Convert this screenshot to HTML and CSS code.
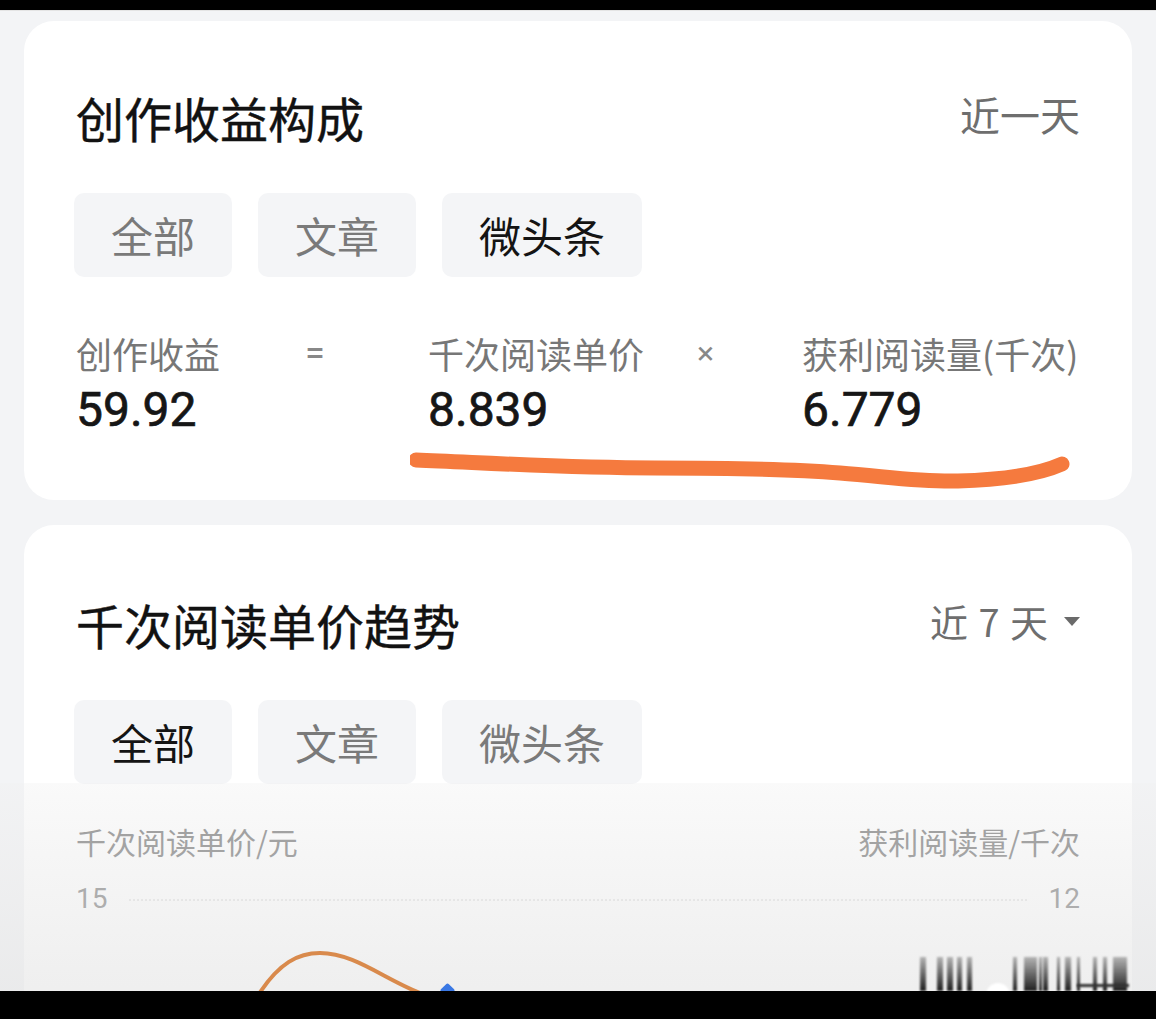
FILE: index.html
```html
<!DOCTYPE html>
<html lang="zh-CN">
<head>
<meta charset="utf-8">
<title>创作收益构成</title>
<link rel="stylesheet" href="styles.css">
</head>
<body>
<div class="screen">
  <div class="edge edge-top"></div>
  <div class="viewport">
    <section class="card card-income">
      <header class="card-head">
        <h2 class="card-title">创作收益构成</h2>
        <span class="range">近一天</span>
      </header>
      <div class="tabs">
        <span class="tab">全部</span>
        <span class="tab">文章</span>
        <span class="tab tab-on">微头条</span>
      </div>
      <div class="formula">
        <span class="f-label">创作收益</span>
        <span class="f-op">=</span>
        <span class="f-label">千次阅读单价</span>
        <span class="f-op f-times">×</span>
        <span class="f-label">获利阅读量(千次)</span>
        <span class="f-value">59.92</span>
        <span></span>
        <span class="f-value">8.839</span>
        <span></span>
        <span class="f-value">6.779</span>
      </div>
      <svg class="scribble" viewBox="0 0 700 50" width="700" height="50" aria-hidden="true">
        <path d="M6 14 C 80 17, 160 22, 245 22 S 380 23, 430 27 S 510 36, 548 35 S 625 30, 652 18" fill="none" stroke="#f57a3e" stroke-width="15" stroke-linecap="round" stroke-linejoin="round"/>
      </svg>
    </section>

    <section class="card card-trend">
      <header class="card-head">
        <h2 class="card-title">千次阅读单价趋势</h2>
        <span class="range range-pick">近 7 天<i class="caret"></i></span>
      </header>
      <div class="tabs">
        <span class="tab tab-on">全部</span>
        <span class="tab">文章</span>
        <span class="tab">微头条</span>
      </div>
      <div class="axis-titles">
        <span>千次阅读单价/元</span>
        <span>获利阅读量/千次</span>
      </div>
      <div class="axis-row">
        <span class="tick">15</span>
        <span class="gridline"></span>
        <span class="tick">12</span>
      </div>
      <svg class="chart" viewBox="0 0 1108 80" width="1108" height="80" aria-hidden="true">
        <path d="M233 80 C 255 45, 275 36, 296 36 C 330 36, 360 62, 396 76" fill="none" stroke="#d98a4c" stroke-width="4" stroke-linecap="round"/>
        <rect x="418" y="68" width="11" height="11" rx="2" fill="#3a78e4" transform="rotate(45 423.5 73.5)"/>
      </svg>
    </section>

    <div class="fade"></div>
    <div class="watermark">
      <i style="left:0;width:6px"></i>
      <i style="left:17px;width:6px"></i>
      <i style="left:27px;width:6px"></i>
      <i style="left:37px;width:5px"></i>
      <i style="left:47px;width:5px"></i>
      <i style="left:93px;width:4px"></i>
      <i style="left:104px;width:13px"></i>
      <i style="left:119px;width:3px"></i>
      <i style="left:123px;width:5px"></i>
      <i style="left:137px;width:3px"></i>
      <i style="left:145px;width:6px"></i>
      <i style="left:157px;width:3px"></i>
      <i style="left:173px;width:4px"></i>
      <i style="left:183px;width:4px"></i>
      <i style="left:193px;width:14px"></i>
      <b class="wm-dot"></b>
      <b class="wm-line"></b>
    </div>
  </div>
  <div class="edge edge-bottom"></div>
</div>
</body>
</html>
```

FILE: styles.css
```css
* { box-sizing: border-box; }

html, body {
  margin: 0;
  padding: 0;
  background: #000;
}

body {
  font-family: "Noto Sans CJK SC", "Noto Sans", sans-serif;
  color: #151515;
}

.screen {
  width: 1156px;
  height: 1019px;
  display: flex;
  flex-direction: column;
  overflow: hidden;
}

.edge { background: #000; flex: none; }
.edge-top { height: 10px; }
.edge-bottom { height: 28px; }

.viewport {
  flex: 1;
  position: relative;
  overflow: hidden;
  background: #f3f4f6;
  padding: 10px 24px 0;
  border-top: 1px solid #e4e4e4;
}

.card {
  background: #fff;
  border-radius: 30px;
  position: relative;
}

.card-income {
  padding: 67px 52px 62px;
}

.card-trend {
  margin-top: 25px;
  padding: 70px 52px 0;
  height: 600px;
}

.card-head {
  display: flex;
  justify-content: space-between;
  align-items: center;
  height: 58px;
}

.card-title {
  margin: 0;
  font-size: 48px;
  line-height: 58px;
  font-weight: 400;
  -webkit-text-stroke: 0.4px #121212;
  color: #121212;
  letter-spacing: 0;
}

.range {
  font-size: 40px;
  line-height: 50px;
  color: #6e6e6e;
  margin-top: -6px;
}

.range-pick {
  font-size: 38px;
  display: flex;
  align-items: center;
  word-spacing: 2px;
}

.caret {
  display: inline-block;
  width: 0;
  height: 0;
  margin-left: 16px;
  border-left: 8px solid transparent;
  border-right: 8px solid transparent;
  border-top: 9px solid #6a6a6a;
}

.tabs {
  display: flex;
  gap: 26px;
  margin-top: 47px;
  margin-left: -2px;
}

.tab {
  height: 84px;
  padding: 0 37px;
  border-radius: 10px;
  background: #f4f5f7;
  color: #7a7a7a;
  font-size: 42px;
  line-height: 84px;
}

.tab-on { color: #141414; }

.formula {
  display: grid;
  grid-template-columns: 229px 123px 269px 105px 1fr;
  grid-template-rows: 44px 56px;
  row-gap: 7px;
  margin-top: 54px;
}

.f-label {
  font-size: 36px;
  line-height: 44px;
  color: #777;
  white-space: nowrap;
}

.f-op {
  font-family: "Roboto", "Liberation Sans", sans-serif;
  font-size: 36px;
  line-height: 44px;
  color: #888;
}

.f-times { font-size: 32px; }

.f-value {
  font-family: "Roboto", "Noto Sans", sans-serif;
  font-weight: 400;
  -webkit-text-stroke: 0.7px #161616;
  font-size: 48px;
  line-height: 56px;
  color: #161616;
}

.scribble {
  position: absolute;
  left: 386px;
  top: 425px;
}

.axis-titles {
  display: flex;
  justify-content: space-between;
  margin-top: 37px;
  font-size: 30px;
  line-height: 40px;
  color: #6e6e6e;
}

.axis-row {
  display: flex;
  align-items: center;
  gap: 22px;
  margin-top: 20px;
  height: 36px;
}

.tick {
  font-family: "Roboto", "Liberation Sans", sans-serif;
  font-size: 28px;
  color: #757575;
  line-height: 36px;
}

.gridline {
  flex: 1;
  border-top: 2px dotted #e4e4e4;
  margin-top: 2px;
}

.chart {
  display: block;
  position: relative;
  z-index: 2;
  margin-left: -52px;
  margin-top: 0;
}

.fade {
  position: absolute;
  left: 0;
  right: 0;
  top: 772px;
  bottom: 0;
  background: linear-gradient(rgba(240, 240, 240, 0.35), rgba(228, 228, 228, 0.6));
  pointer-events: none;
}

.watermark {
  position: absolute;
  left: 920px;
  bottom: 0;
  width: 210px;
  height: 34px;
  z-index: 3;
}

.watermark i {
  position: absolute;
  bottom: 0;
  height: 34px;
  background: linear-gradient(rgba(40, 40, 40, 0.3), rgba(20, 20, 20, 0.95));
  filter: blur(1px);
}

.wm-dot {
  position: absolute;
  left: 66px;
  bottom: -4px;
  width: 24px;
  height: 12px;
  border-radius: 12px 12px 0 0;
  background: #fff;
  filter: blur(1px);
}

.wm-line {
  position: absolute;
  left: 157px;
  bottom: 4px;
  width: 52px;
  height: 3px;
  background: #333;
  filter: blur(1px);
}
```
